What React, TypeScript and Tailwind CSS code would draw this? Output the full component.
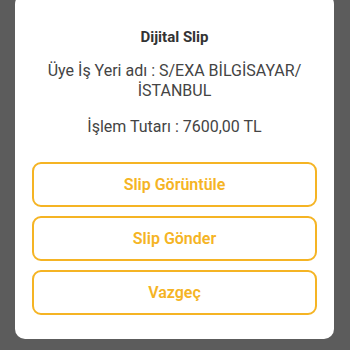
import React from 'react';

const buttons = ['Slip Görüntüle', 'Slip Gönder', 'Vazgeç'];

export default function App() {
  return (
    <div className="w-[350px] h-[350px] overflow-hidden bg-[#5c5c5c]" style={{ fontFamily: 'Roboto, "Noto Sans", sans-serif' }}>
      <div className="mx-[15px] -mt-[6px] w-[319px] rounded-[10px] bg-white px-[17px] pt-[32px] pb-[24px]">
        <h1 className="text-center text-[15px] font-bold leading-[22px] text-[#333333]">Dijital Slip</h1>
        <p className="mt-[13px] text-center text-[16px] leading-[20px] text-[#444444]">
          Üye İş Yeri adı : S/EXA BİLGİSAYAR/ İSTANBUL
        </p>
        <p className="mt-[16px] text-center text-[16px] leading-[20px] text-[#444444]">İşlem Tutarı : 7600,00 TL</p>
        <div className="mt-[25px] flex flex-col gap-[9px]">
          {buttons.map((b) => (
            <button
              key={b}
              className="h-[45px] w-full rounded-[9px] border-2 border-[#f5b424] bg-white text-[16px] font-semibold text-[#f5b424]"
            >
              {b}
            </button>
          ))}
        </div>
      </div>
    </div>
  );
}
